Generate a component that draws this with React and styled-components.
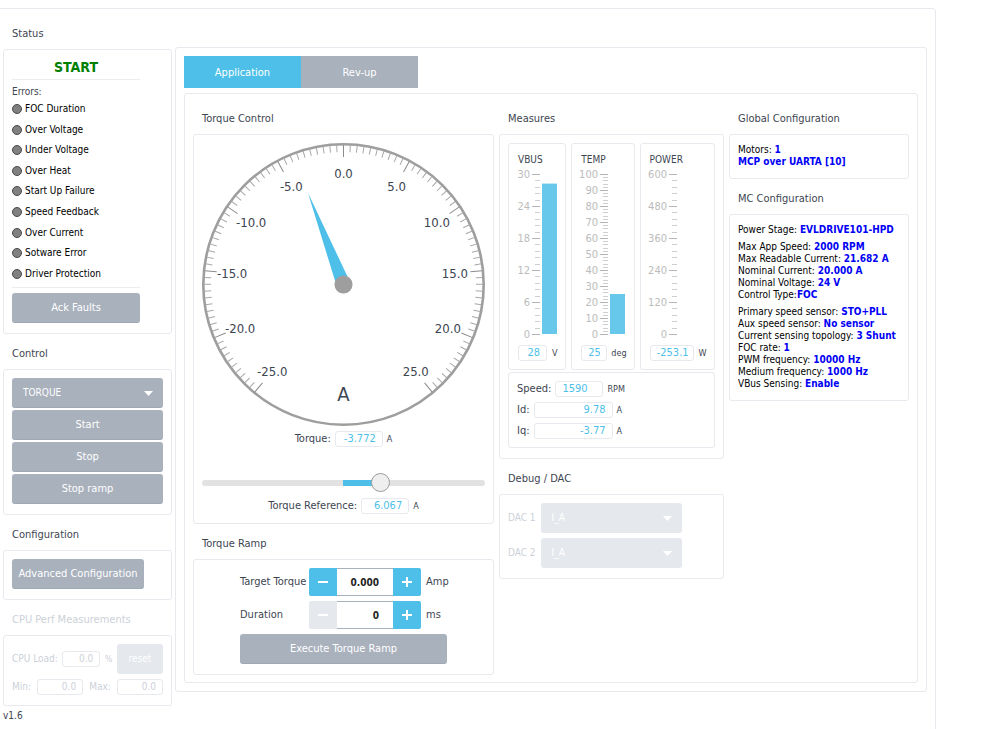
import React, { useState } from "react";
import styled, { createGlobalStyle } from "styled-components";

const INK = "#3d4551";
const ACCENT = "#4dbfe8";
const GREY = "#a9b1bd";
const PALE = "#e5e8ed";
const MUTED = "#ccd1d9";
const LINE = "#e7e9ee";

const GlobalStyle = createGlobalStyle`
  *, *::before, *::after { box-sizing: border-box; }
  body {
    margin: 0;
    background: #fff;
    color: ${INK};
    font: 11px/16px "DejaVu Sans Condensed", "DejaVu Sans", "Noto Sans", sans-serif;
  }
  button, input, select { font: inherit; margin: 0; }
`;

const Frame = styled.div`
  display: flex;
  align-items: flex-start;
  gap: 3px;
  min-height: calc(100vh - 8px);
  margin: 8px 63px 0 0;
  padding: 5px 8px 0 3px;
  border: 1px solid ${LINE};
  border-width: 1px 1px 0 0;
  border-radius: 0 4px 0 0;
`;

const Sidebar = styled.aside`
  flex: 0 0 169px;
`;

const Title = styled.h2`
  margin: 0;
  padding: 10px 9px 5px;
  font-size: 11px;
  font-weight: 400;
  line-height: 20px;
  color: ${(p) => (p.$muted ? MUTED : INK)};
`;

const Panel = styled.section`
  padding: ${(p) => p.$pad || "8px 8px 10px"};
  border: 1px solid ${LINE};
  border-radius: 3px;
`;

const Version = styled.footer`
  font-size: 10px;
  line-height: 20px;
`;

const StatusBody = styled.div`
  width: 128px;
`;

const State = styled.div`
  padding-bottom: 2px;
  border-bottom: 1px solid #ececef;
  font-size: 14px;
  font-weight: 700;
  line-height: 19px;
  text-align: center;
  color: #008000;
`;

const ErrorsLabel = styled.div`
  padding-top: 4px;
  font-size: 10px;
  line-height: 15px;
`;

const ErrorList = styled.ul`
  display: grid;
  grid-auto-rows: 1fr;
  align-items: center;
  height: 185px;
  margin: 0;
  padding: 0;
  list-style: none;
  font-size: 10px;
  color: #000;
`;

const ErrorItem = styled.li`
  display: flex;
  align-items: center;
  gap: 3px;
`;

const Led = styled.span`
  width: 10px;
  height: 10px;
  border: 1px solid #4a4a4a;
  border-radius: 50%;
  background: #808080;
`;

const Divider = styled.hr`
  height: 1px;
  margin: 3px 0 5px;
  border: 0;
  background: #ececef;
`;

const Button = styled.button`
  width: ${(p) => p.$width || "100%"};
  height: 30px;
  padding: 0;
  border: 0;
  border-bottom: 1px solid #9fa8b6;
  border-radius: 3px;
  background: ${GREY};
  color: #fff;
  white-space: nowrap;
  &:disabled {
    background: ${PALE};
    border-color: ${PALE};
  }
`;

const Stack = styled.div`
  display: flex;
  flex-direction: column;
  gap: ${(p) => p.$gap}px;
`;

const SelectBox = styled.div`
  display: grid;
  align-items: center;
  width: ${(p) => p.$width || "100%"};
  & > * { grid-area: 1 / 1; }
  svg {
    justify-self: end;
    margin-right: 10px;
    pointer-events: none;
  }
`;

const NativeSelect = styled.select`
  appearance: none;
  width: 100%;
  height: 30px;
  padding: 0 11px;
  border: 0;
  border-bottom: 1px solid #9fa8b6;
  border-radius: 3px;
  background: ${GREY};
  color: #fff;
  font-size: 10px;
  opacity: 1;
  &:disabled {
    background: ${PALE};
    border-color: ${PALE};
  }
`;

function Select({ width, options, ...rest }) {
  return (
    <SelectBox $width={width}>
      <NativeSelect {...rest}>
        {options.map((o) => <option key={o}>{o}</option>)}
      </NativeSelect>
      <svg width="9" height="5" aria-hidden="true">
        <path d="M0 0H9L4.5 5Z" fill="#fff" />
      </svg>
    </SelectBox>
  );
}

const Row = styled.div`
  display: flex;
  align-items: center;
  justify-content: ${(p) => p.$justify || "flex-start"};
  gap: ${(p) => p.$gap || 4}px;
  color: ${(p) => (p.$muted ? MUTED : "inherit")};
  font-size: ${(p) => (p.$small ? 10 : 11)}px;
  white-space: nowrap;
`;

const Value = styled.input`
  width: ${(p) => p.$width}px;
  height: 16px;
  padding: 0 ${(p) => p.$inset || 6}px;
  border: 1px solid ${LINE};
  border-radius: 3px;
  background: #fff;
  color: ${ACCENT};
  text-align: ${(p) => p.$align || "right"};
  &:disabled { color: ${MUTED}; }
`;

const Unit = styled.span`
  font-size: 9px;
`;

const Main = styled.main`
  flex: 1;
  min-width: 0;
  margin-top: 33px;
  padding: 8px;
  border: 1px solid ${LINE};
  border-radius: 3px;
`;

const Tabs = styled.div`
  display: flex;
  margin-bottom: 5px;
`;

const Tab = styled.button`
  width: 117px;
  height: 32px;
  padding: 1px 0 0;
  border: 0;
  background: ${(p) => (p.$active ? ACCENT : GREY)};
  color: #fff;
`;

const Workspace = styled.div`
  display: grid;
  grid-template-columns: minmax(0, 301fr) minmax(0, 225fr) minmax(0, 180fr);
  align-items: start;
  gap: 5px;
  padding: 5px 8px 7px;
  border: 1px solid ${LINE};
  border-radius: 3px;
`;

const Drawing = styled.svg`
  display: block;
  width: ${(p) => p.$width || "100%"};
  overflow: visible;
  text { font-size: ${(p) => p.$size}px; fill: ${(p) => p.$ink || INK}; }
`;

const Slider = styled.input`
  appearance: none;
  display: block;
  width: 100%;
  height: 20px;
  margin: 26px 0 4px;
  background: transparent;
  &::-webkit-slider-runnable-track {
    height: 6px;
    border-radius: 3px;
    background: linear-gradient(
      to right,
      #e2e2e2 50%,
      ${ACCENT} 50%,
      ${ACCENT} var(--fill),
      #e2e2e2 var(--fill)
    );
  }
  &::-webkit-slider-thumb {
    appearance: none;
    width: 19px;
    height: 19px;
    margin-top: -7px;
    border: 1px solid #9c9c9c;
    border-radius: 50%;
    background: #efefef;
  }
`;

const CENTER = 141;
const STEP = 28.1 / 5;
const polar = (value, r) => {
  const a = (value * STEP * Math.PI) / 180;
  return [CENTER + r * Math.sin(a), CENTER - r * Math.cos(a)];
};

const GAUGE_LABELS = [
  ["-25.0", 70, 91], ["-20.0", 38, 48], ["-15.0", 30, -6], ["-10.0", 49, -57],
  ["-5.0", 89, -93], ["0.0", 141, -106], ["5.0", 194, -93], ["10.0", 234, -57],
  ["15.0", 252, -6], ["20.0", 245, 48], ["25.0", 213, 91],
];

const GaugeUnit = styled.text`
  && { font-size: 20px; }
`;

function Gauge({ value }) {
  const ticks = [];
  for (let i = -50; i <= 50; i += 1) {
    const major = i % 10 === 0;
    const [x1, y1] = polar(i / 2, 139);
    const [x2, y2] = polar(i / 2, major ? 127 : 132);
    ticks.push(
      <line key={i} x1={x1} y1={y1} x2={x2} y2={y2} stroke={major ? "#8c8c8c" : "#a8a8a8"} strokeWidth="1" />
    );
  }
  return (
    <Drawing viewBox="0 0 282 282" $size={13} role="img" aria-label={`Torque ${value} A`}>
      <circle cx={CENTER} cy={CENTER} r="139.7" fill="none" stroke="#9e9e9e" strokeWidth="2.6" />
      {ticks}
      <path
        d={`M${CENTER} ${CENTER - 98}l7 98h-14Z`}
        fill={ACCENT}
        transform={`rotate(${value * STEP} ${CENTER} ${CENTER})`}
      />
      <circle cx={CENTER} cy={CENTER} r="9" fill="#9e9e9e" />
      {GAUGE_LABELS.map(([t, x, y]) => (
        <text key={t} x={x} y={CENTER + y} textAnchor="middle">{t}</text>
      ))}
      <GaugeUnit x={CENTER} y={CENTER + 116} textAnchor="middle">A</GaugeUnit>
    </Drawing>
  );
}

const GaugeRow = styled(Row)`
  justify-content: center;
  margin-top: 5px;
`;

const RampGrid = styled.div`
  display: grid;
  grid-template-columns: 69px auto 21px;
  justify-content: center;
  align-items: center;
  gap: 5px 0;
  & > button { grid-column: 1 / -1; }
`;

const StepBox = styled.div`
  display: flex;
  width: 112px;
  margin-right: 5px;
`;

const StepButton = styled.button`
  display: grid;
  place-items: center;
  width: 28px;
  height: 28px;
  padding: 0;
  border: 0;
  border-radius: ${(p) => (p.$end ? "0 2px 2px 0" : "2px 0 0 2px")};
  background: ${ACCENT};
  &:disabled { background: ${PALE}; }
`;

const StepInput = styled.input`
  flex: 1;
  min-width: 0;
  height: 28px;
  padding: 0 14px 0 4px;
  border: 1px solid ${GREY};
  border-width: 1px 0;
  color: #222;
  font-weight: 700;
  font-size: 10px;
  text-align: right;
`;

function Stepper({ id, value, step, format }) {
  const [n, setN] = useState(value);
  return (
    <StepBox>
      <StepButton aria-label="Decrease" disabled={step.lockMin && n <= 0} onClick={() => setN(n - step.by)}>
        <svg width="12" height="12"><path d="M1 6h10" stroke="#fff" strokeWidth="2" /></svg>
      </StepButton>
      <StepInput id={id} value={format(n)} onChange={(e) => setN(Number(e.target.value) || 0)} />
      <StepButton $end aria-label="Increase" onClick={() => setN(n + step.by)}>
        <svg width="12" height="12"><path d="M1 6h10M6 1v10" stroke="#fff" strokeWidth="2" /></svg>
      </StepButton>
    </StepBox>
  );
}

const Meters = styled.div`
  display: grid;
  grid-template-columns: minmax(0, 58fr) minmax(0, 63fr) minmax(0, 75fr);
  gap: 5px;
  margin-bottom: 2px;
`;

const MeterTitle = styled.label`
  display: block;
  font-size: 10px;
  line-height: 16px;
`;

const MeterRow = styled(Row)`
  margin-top: 5px;
`;

const tickYs = (count) => Array.from({ length: count + 1 }, (_, i) => 6 + (160 * i) / count);

function Meter({ id, name, labels, axis, fill, readout, unit, inputWidth, inputInset, gap }) {
  const majors = labels.length - 1;
  return (
    <Panel $pad="8px 0 8px 9px">
      <MeterTitle htmlFor={id}>{name}</MeterTitle>
      <Drawing $width={`${axis + 28}px`} width={axis + 28} height="172" $size={11} $ink="#bcbcbc" aria-hidden="true">
        {tickYs(majors * 5).map((y, i) => (
          <rect key={y} x={i % 5 ? axis + 5 : axis + 2} y={Math.round(y)} width={i % 5 ? 5 : 8} height="1"
            fill={i % 5 ? "#cfcfcf" : "#b4b4b4"} />
        ))}
        {labels.map((t, i) => (
          <text key={t} x={axis} y={10 + (160 * i) / majors} textAnchor="end">{t}</text>
        ))}
        {fill > 0 && (
          <rect x={axis + 12} y={166 - 160 * fill} width="15" height={160 * fill} fill="#68c8eb" />
        )}
      </Drawing>
      <MeterRow $gap={gap}>
        <Value id={id} readOnly defaultValue={readout} $width={inputWidth} $inset={inputInset} />
        <Unit>{unit}</Unit>
      </MeterRow>
    </Panel>
  );
}

const Info = styled.dl`
  margin: 0;
  line-height: 12px;
  font-size: 10px;
  color: #000;
  white-space: nowrap;
  & + & { margin-top: 5px; }
  dt, dd { display: inline; margin: 0; }
  dd { font-weight: 700; color: #0000f5; }
`;

function Facts({ items }) {
  return (
    <Info>
      {items.map(([k, v, tight]) => (
        <div key={k}>
          <dt>{k}</dt>{tight ? "" : " "}<dd>{v}</dd>
        </div>
      ))}
    </Info>
  );
}

const ERRORS = ["FOC Duration", "Over Voltage", "Under Voltage", "Over Heat", "Start Up Failure",
  "Speed Feedback", "Over Current", "Sotware Error", "Driver Protection"];

const LIMIT = 21.682;

export default function App() {
  const [tab, setTab] = useState("Application");
  const [reference, setReference] = useState(6.067);
  return (
    <>
      <GlobalStyle />
      <Frame>
        <Sidebar>
          <Title>Status</Title>
          <Panel>
            <StatusBody>
              <State>START</State>
              <ErrorsLabel>Errors:</ErrorsLabel>
              <ErrorList>
                {ERRORS.map((e) => <ErrorItem key={e}><Led />{e}</ErrorItem>)}
              </ErrorList>
              <Divider />
              <Button>Ack Faults</Button>
            </StatusBody>
          </Panel>

          <Title>Control</Title>
          <Panel>
            <Stack $gap={2}>
              <Select aria-label="Control mode" options={["TORQUE", "SPEED"]} />
              <Button>Start</Button>
              <Button>Stop</Button>
              <Button>Stop ramp</Button>
            </Stack>
          </Panel>

          <Title>Configuration</Title>
          <Panel>
            <Button $width="132px">Advanced Configuration</Button>
          </Panel>

          <Title $muted>CPU Perf Measurements</Title>
          <Panel>
            <Stack $gap={5}>
              <Row $muted $small $justify="space-between">
                <label htmlFor="load">CPU Load:</label>
                <Value id="load" disabled defaultValue="0.0" $width={38} />
                <Unit>%</Unit>
                <Button disabled $width="46px">reset</Button>
              </Row>
              <Row $muted $small $justify="space-between">
                <label htmlFor="min">Min:</label>
                <Value id="min" disabled defaultValue="0.0" $width={46} />
                <label htmlFor="max">Max:</label>
                <Value id="max" disabled defaultValue="0.0" $width={46} />
              </Row>
            </Stack>
          </Panel>
          <Version>v1.6</Version>
        </Sidebar>

        <Main>
          <Tabs role="tablist">
            {["Application", "Rev-up"].map((t) => (
              <Tab key={t} role="tab" aria-selected={tab === t} $active={tab === t} onClick={() => setTab(t)}>{t}</Tab>
            ))}
          </Tabs>
          <Workspace>
            <div>
              <Title>Torque Control</Title>
              <Panel $pad="8px 8px 9px">
                <Gauge value={-3.772} />
                <GaugeRow>
                  <label htmlFor="torque">Torque:</label>
                  <Value id="torque" readOnly defaultValue="-3.772" $width={48} />
                  <Unit>A</Unit>
                </GaugeRow>
                <Slider type="range" aria-label="Torque reference" min={-LIMIT} max={LIMIT} step="0.001"
                  value={reference} onChange={(e) => setReference(Number(e.target.value))}
                  style={{ "--fill": `${50 + (reference / LIMIT) * 47}%` }} />
                <GaugeRow>
                  <label htmlFor="reference">Torque Reference:</label>
                  <Value id="reference" readOnly value={reference.toFixed(3)} $width={48} />
                  <Unit>A</Unit>
                </GaugeRow>
              </Panel>
              <Title>Torque Ramp</Title>
              <Panel>
                <RampGrid>
                  <label htmlFor="target">Target Torque</label>
                  <Stepper id="target" value={0} step={{ by: 0.1 }} format={(n) => n.toFixed(3)} />
                  <span>Amp</span>
                  <label htmlFor="duration">Duration</label>
                  <Stepper id="duration" value={0} step={{ by: 1, lockMin: true }} format={(n) => String(n)} />
                  <span>ms</span>
                  <Button>Execute Torque Ramp</Button>
                </RampGrid>
              </Panel>
            </div>

            <div>
              <Title>Measures</Title>
              <Panel>
                <Meters>
                  <Meter id="vbus" name="VBUS" labels={["30", "24", "18", "12", "6", "0"]} axis={12} fill={0.94}
                    readout="28" unit="V" inputWidth={29} gap={5} />
                  <Meter id="temp" name="TEMP" axis={17} fill={0.25}
                    labels={["100", "90", "80", "70", "60", "50", "40", "30", "20", "10", "0"]}
                    readout="25" unit="deg" inputWidth={26} gap={4} />
                  <Meter id="power" name="POWER" labels={["600", "480", "360", "240", "120", "0"]} axis={17} fill={0}
                    readout="-253.1" unit="W" inputWidth={44} inputInset={4} gap={5} />
                </Meters>
                <Panel $pad="8px">
                  <Stack $gap={5}>
                    <Row>
                      <label htmlFor="speed">Speed:</label>
                      <Value id="speed" readOnly defaultValue="1590" $width={48} $align="left" />
                      <Unit>RPM</Unit>
                    </Row>
                    <Row>
                      <label htmlFor="id">Id:</label>
                      <Value id="id" readOnly defaultValue="9.78" $width={79} />
                      <Unit>A</Unit>
                    </Row>
                    <Row>
                      <label htmlFor="iq">Iq:</label>
                      <Value id="iq" readOnly defaultValue="-3.77" $width={79} />
                      <Unit>A</Unit>
                    </Row>
                  </Stack>
                </Panel>
              </Panel>
              <Title>Debug / DAC</Title>
              <Panel>
                <Stack $gap={5}>
                  <Row $muted $small $gap={5}>
                    <label htmlFor="dac1">DAC 1</label>
                    <Select id="dac1" width="141px" disabled options={["I_A"]} />
                  </Row>
                  <Row $muted $small $gap={5}>
                    <label htmlFor="dac2">DAC 2</label>
                    <Select id="dac2" width="141px" disabled options={["I_A"]} />
                  </Row>
                </Stack>
              </Panel>
            </div>

            <div>
              <Title>Global Configuration</Title>
              <Panel $pad="9px 8px 10px">
                <Facts items={[["Motors:", "1"], ["", "MCP over UARTA [10]"]]} />
              </Panel>
              <Title>MC Configuration</Title>
              <Panel $pad="9px 8px 10px">
                <Facts items={[["Power Stage:", "EVLDRIVE101-HPD"]]} />
                <Facts items={[["Max App Speed:", "2000 RPM"], ["Max Readable Current:", "21.682 A"],
                  ["Nominal Current:", "20.000 A"], ["Nominal Voltage:", "24 V"], ["Control Type:", "FOC", true]]} />
                <Facts items={[["Primary speed sensor:", "STO+PLL"], ["Aux speed sensor:", "No sensor"],
                  ["Current sensing topology:", "3 Shunt"], ["FOC rate:", "1"], ["PWM frequency:", "10000 Hz"],
                  ["Medium frequency:", "1000 Hz"], ["VBus Sensing:", "Enable"]]} />
              </Panel>
            </div>
          </Workspace>
        </Main>
      </Frame>
    </>
  );
}
